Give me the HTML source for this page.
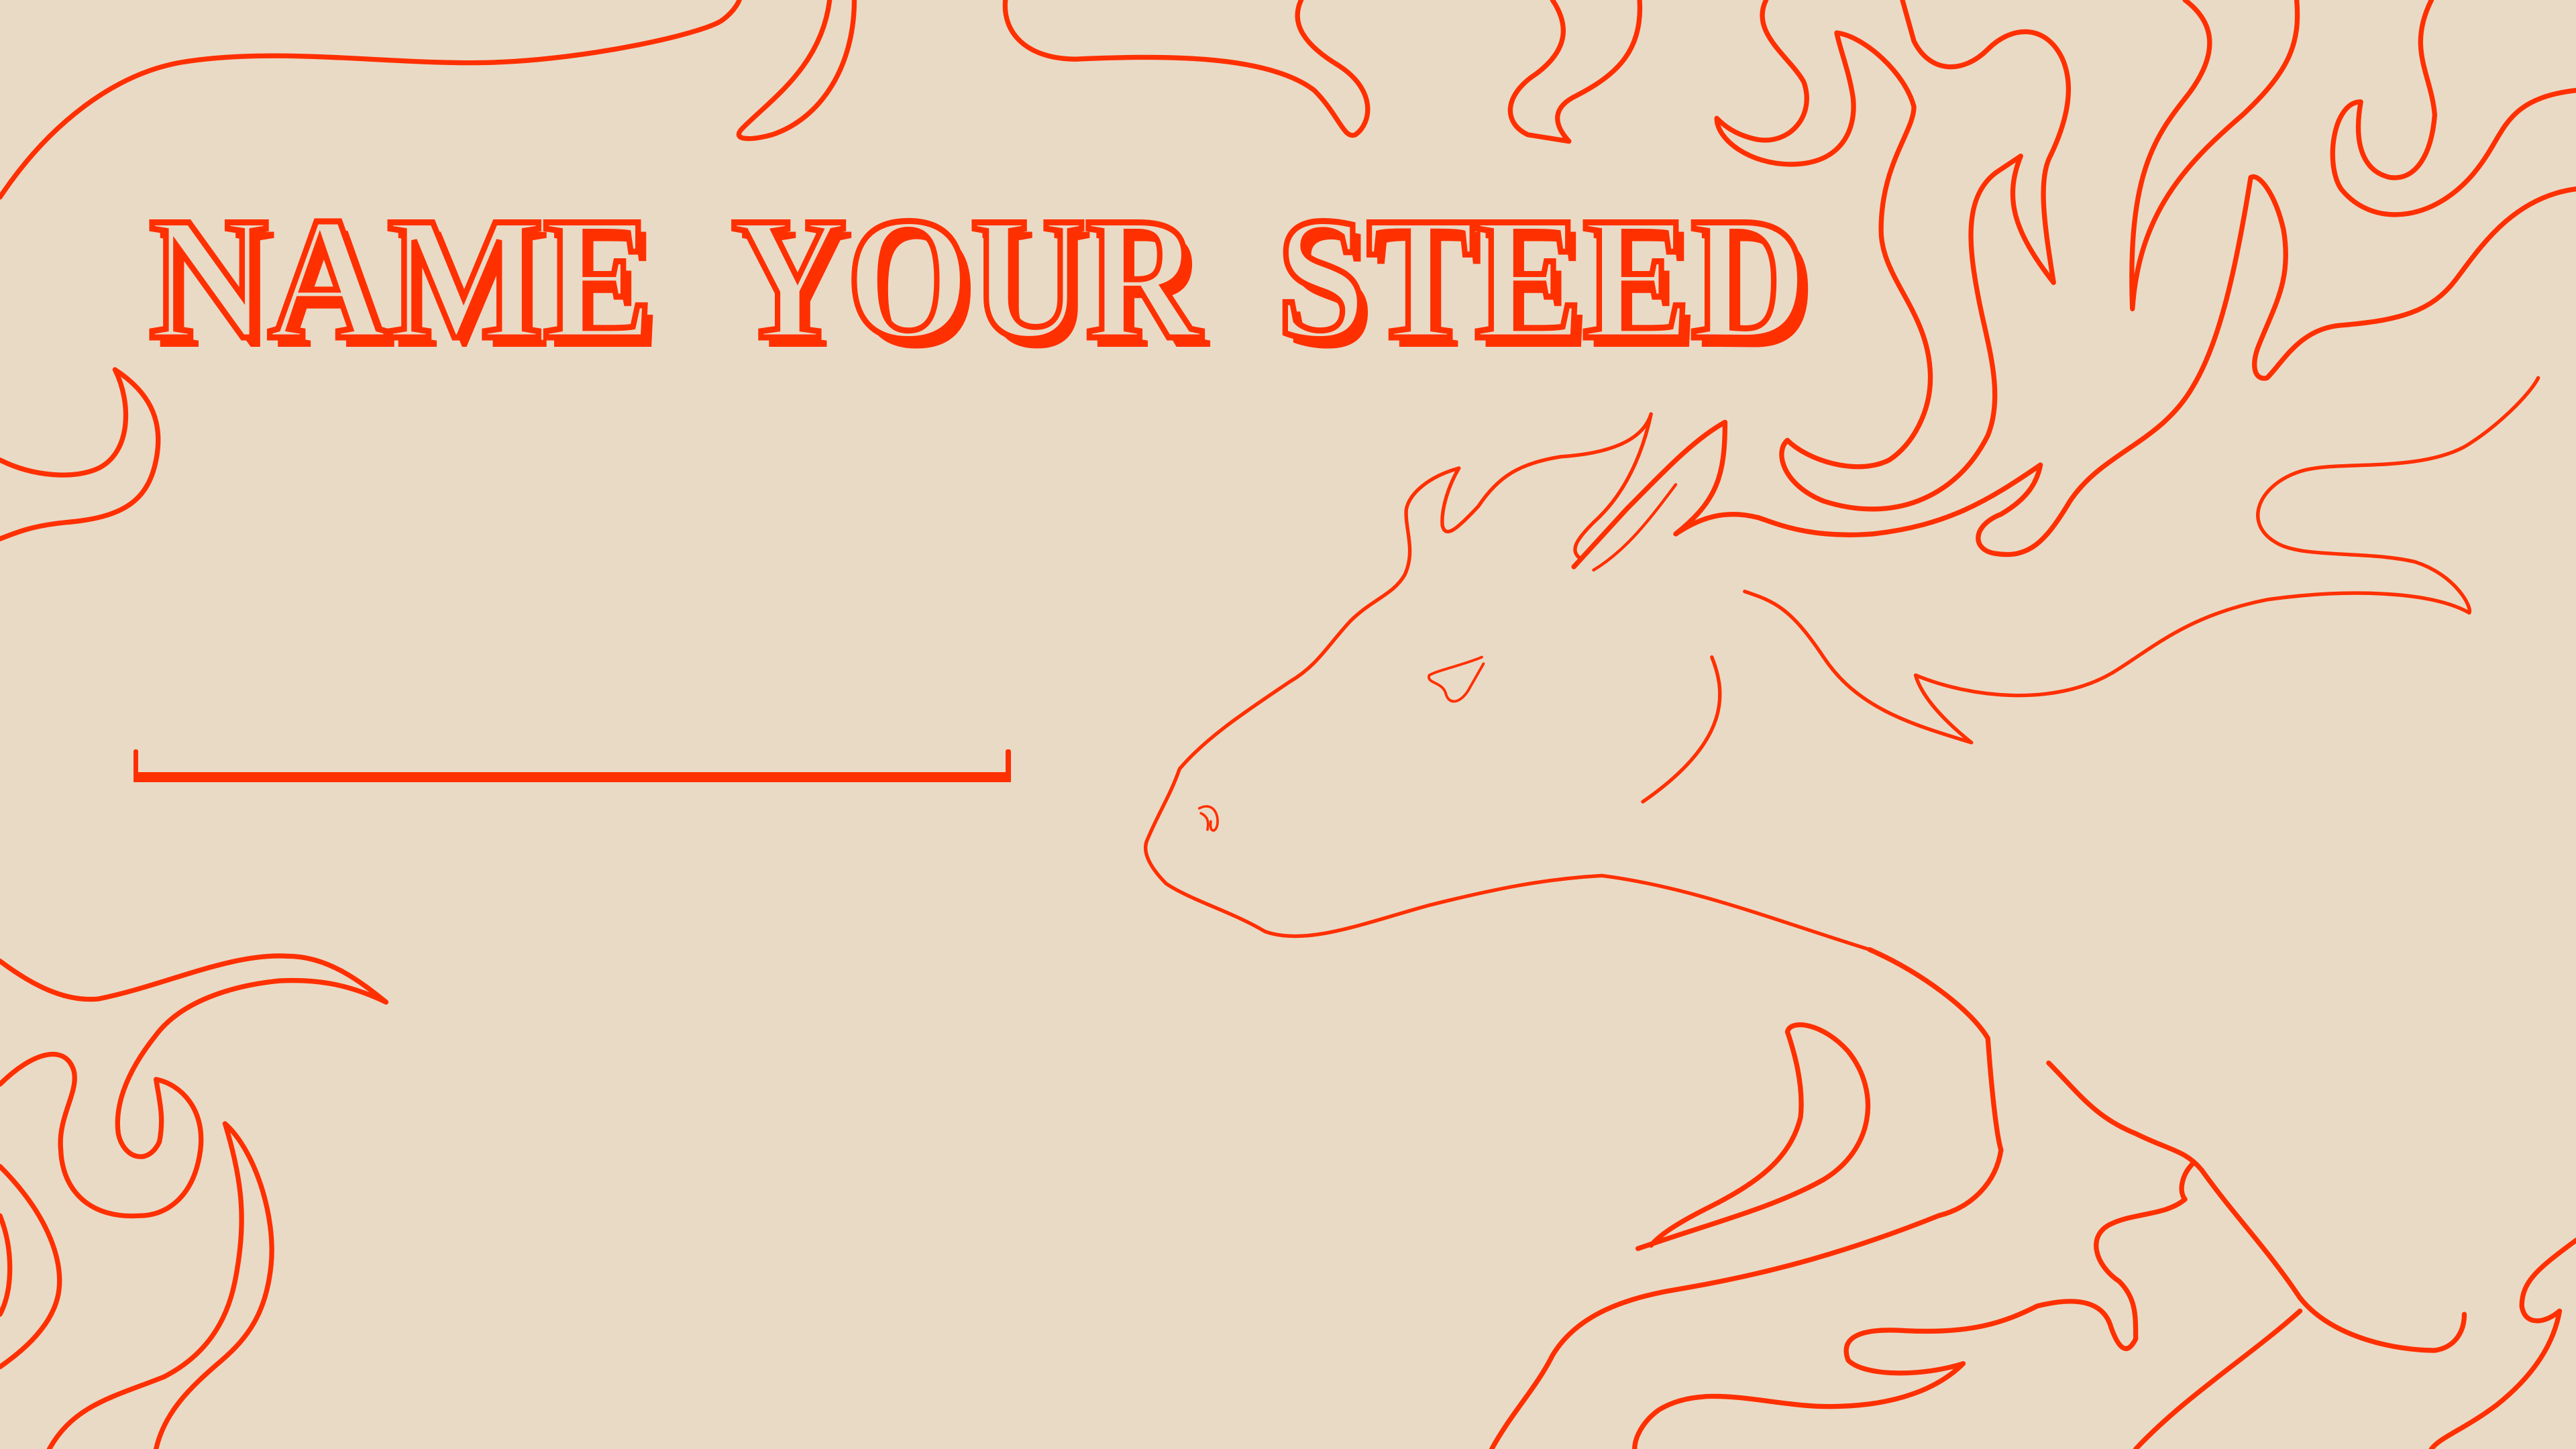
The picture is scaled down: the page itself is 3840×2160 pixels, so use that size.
<!DOCTYPE html>
<html><head><meta charset="utf-8"><style>
html,body{margin:0;padding:0;background:#e9dac6;}
body{width:3840px;height:2160px;overflow:hidden;position:relative;}
svg{position:absolute;left:0;top:0;}
</style></head><body>
<svg width="3840" height="2160" viewBox="0 0 1568 882" fill="none" stroke="#ff3000" stroke-width="3" stroke-linecap="round" stroke-linejoin="round">
<path d="M0,120 C30,75 70,45 110,38 C170,28 240,40 300,38 C360,36 430,20 440,12 C448,6 450,0 450,0"/>
<path d="M505,0 C500,40 470,60 452,78 C445,85 455,86 470,82 C500,72 520,40 520,0"/>
<path d="M612,0 C610,20 625,36 655,36 C700,34 770,32 800,55 C815,70 818,85 825,82 C835,75 838,55 815,40 C795,28 785,15 792,0"/>
<path d="M945,0 C955,15 955,30 935,45 C915,58 915,75 930,82 L955,86 C945,75 945,65 960,58 C985,45 1000,30 998,0"/>
<path d="M1075,0 C1065,20 1090,35 1098,50 C1105,70 1090,88 1070,85 C1055,82 1048,75 1045,72 C1045,85 1065,100 1090,100 C1120,100 1130,80 1128,60 C1126,45 1120,30 1118,20 C1135,22 1160,45 1165,65 C1165,80 1145,100 1145,140 C1145,170 1175,190 1175,230 C1175,250 1165,270 1150,280 C1130,290 1100,280 1088,268 C1080,275 1085,295 1110,305 C1150,318 1190,305 1210,265 C1220,240 1210,210 1205,185 C1198,150 1195,120 1215,105 L1230,95 C1220,120 1225,140 1250,172 C1245,140 1240,110 1248,95 C1260,70 1262,50 1255,35 C1245,15 1225,15 1210,30 C1195,45 1175,45 1165,25 L1158,0"/>
<path d="M1330,0 C1350,15 1350,35 1330,60 C1310,85 1295,110 1298,188 C1302,130 1330,100 1365,70 C1395,42 1400,25 1398,0"/>
<path d="M1480,0 C1465,30 1480,45 1482,70 C1480,95 1470,110 1455,108 C1440,105 1432,90 1437,62 C1420,62 1415,100 1425,115 C1445,140 1485,135 1510,100 C1525,80 1525,60 1568,55"/>
<path d="M1568,115 C1530,120 1510,150 1495,170 C1480,190 1460,195 1425,198 C1400,200 1390,220 1380,230 C1372,232 1370,222 1375,210 C1385,185 1395,170 1390,140 C1385,118 1375,105 1370,108 C1360,170 1350,210 1335,235 C1315,270 1280,275 1260,305 C1245,330 1235,340 1215,337 C1200,335 1200,320 1218,313 C1235,303 1240,293 1242,283 C1210,305 1185,320 1140,325 C1100,328 1080,318 1070,315 C1050,310 1035,315 1020,325 C1045,305 1050,290 1050,257 C1030,268 1010,290 990,310 L958,345"/>
<path stroke-width="1.8" d="M970,347 C990,335 1005,315 1020,295"/>
<path stroke-width="2.2" d="M888,285 C870,290 858,300 856,310 C855,322 862,335 855,350 C848,362 835,365 822,378 C808,393 802,405 785,415 C760,432 735,448 718,468 C712,485 705,495 698,512 C695,520 702,530 710,538 C725,548 750,555 770,567 C795,576 830,562 870,551 C910,541 940,535 975,533 C1030,540 1080,560 1138,578"/>
<path stroke-width="2.2" d="M888,285 C882,295 877,310 878,320 C880,328 887,322 900,308 C912,290 925,282 950,278 C980,276 1000,268 1005,252 C1000,275 990,300 970,318 C960,328 955,335 962,340"/>
<path stroke-width="2.2" d="M1062,360 C1080,366 1090,370 1110,400 C1130,430 1160,440 1200,452 C1185,440 1170,425 1166,411 C1200,425 1250,430 1285,410 C1310,395 1330,375 1380,365 C1430,358 1480,360 1503,373 C1505,370 1495,350 1470,342 C1440,335 1400,340 1385,330 C1365,318 1375,295 1400,287 C1420,280 1470,288 1500,272 C1520,260 1540,240 1545,230"/>
<path stroke-width="1.6" d="M902,400 C890,405 875,408 870,411 C868,416 878,415 880,422 C882,430 890,428 895,418 L903,404"/>
<path stroke-width="2.2" d="M1042,400 C1050,420 1055,450 1000,488"/>
<path stroke-width="1.5" d="M730,492 C738,488 742,495 741,502 C740,507 736,507 737,500 M731,495 C735,497 736,500 735,505"/>
<path d="M1138,578 C1170,592 1200,615 1210,632 C1212,660 1215,690 1218,700 C1215,720 1200,735 1180,740 C1130,760 1080,775 1020,785 C990,790 960,800 945,825 C935,845 920,860 908,882"/>
<path d="M997,760 C1040,745 1080,735 1110,718 C1140,700 1145,665 1125,640 C1110,623 1090,620 1088,628 C1092,640 1098,660 1096,680 C1090,705 1070,720 1040,735 C1020,745 1010,752 1005,758"/>
<path d="M1247,647 C1265,665 1275,680 1300,690 C1320,700 1330,700 1340,712 C1360,740 1380,760 1400,790 C1420,815 1460,822 1482,822 C1495,820 1500,810 1500,800"/>
<path d="M1335,708 C1328,715 1326,725 1330,730 C1318,740 1300,738 1285,745 C1270,752 1275,770 1290,780 C1300,790 1300,800 1300,815 C1295,825 1290,822 1285,808 C1280,790 1260,790 1240,795 C1220,805 1200,812 1160,810 C1130,808 1120,815 1125,828 C1135,838 1170,838 1195,830 C1180,845 1155,855 1120,856 C1080,858 1040,840 1010,858 C1000,865 995,875 995,882"/>
<path d="M1400,798 C1370,825 1330,850 1300,882"/>
<path d="M1568,755 C1545,772 1535,780 1535,795 C1537,808 1550,805 1558,798 C1555,815 1545,835 1520,855 C1500,870 1485,875 1480,882"/>
<path d="M70,225 C80,245 80,275 60,285 C45,292 20,290 0,280 M70,225 C90,238 100,255 95,280 C90,305 75,315 40,318 C20,320 10,324 0,328"/>
<path d="M0,585 C20,600 40,610 60,608 C100,600 140,580 175,582 C200,582 220,598 235,610 C210,598 190,596 170,597 C140,600 110,610 95,630 C75,655 70,675 72,690 C75,705 90,710 97,695 C100,680 97,670 95,657 C110,660 125,675 122,700 C118,730 100,740 85,740 C55,742 38,725 37,700 C35,680 48,665 45,652 C40,635 20,640 0,660"/>
<path d="M137,684 C155,700 168,740 165,770 C162,800 150,815 135,828 C115,845 100,860 95,882"/>
<path d="M137,684 C148,720 150,745 143,780 C138,805 125,825 100,838 C70,850 45,855 30,882"/>
<path d="M0,710 C30,740 40,770 35,790 C30,810 10,825 0,832 M0,740 C8,760 8,785 0,800"/>
</svg>
<svg width="3840" height="2160" viewBox="0 0 3840 2160" font-family="Liberation Serif, serif" font-weight="bold" font-size="262">
<g fill="#ff3000" transform="translate(12,14)">
<text x="222" y="503" textLength="752" lengthAdjust="spacingAndGlyphs">NAME</text>
<text x="1090" y="503" textLength="700" lengthAdjust="spacingAndGlyphs">YOUR</text>
<text x="1903" y="503" textLength="792" lengthAdjust="spacingAndGlyphs">STEED</text>
</g>
<g fill="#e9dac6" stroke="#ff3000" stroke-width="9">
<text x="222" y="503" textLength="752" lengthAdjust="spacingAndGlyphs">NAME</text>
<text x="1090" y="503" textLength="700" lengthAdjust="spacingAndGlyphs">YOUR</text>
<text x="1903" y="503" textLength="792" lengthAdjust="spacingAndGlyphs">STEED</text>
</g>
<rect x="199" y="1151" width="1308" height="15" fill="#ff3000"/>
<rect x="199" y="1117" width="7" height="45" rx="3" fill="#ff3000"/>
<rect x="1499" y="1117" width="8" height="45" rx="3" fill="#ff3000"/>
</svg>
</body></html>
